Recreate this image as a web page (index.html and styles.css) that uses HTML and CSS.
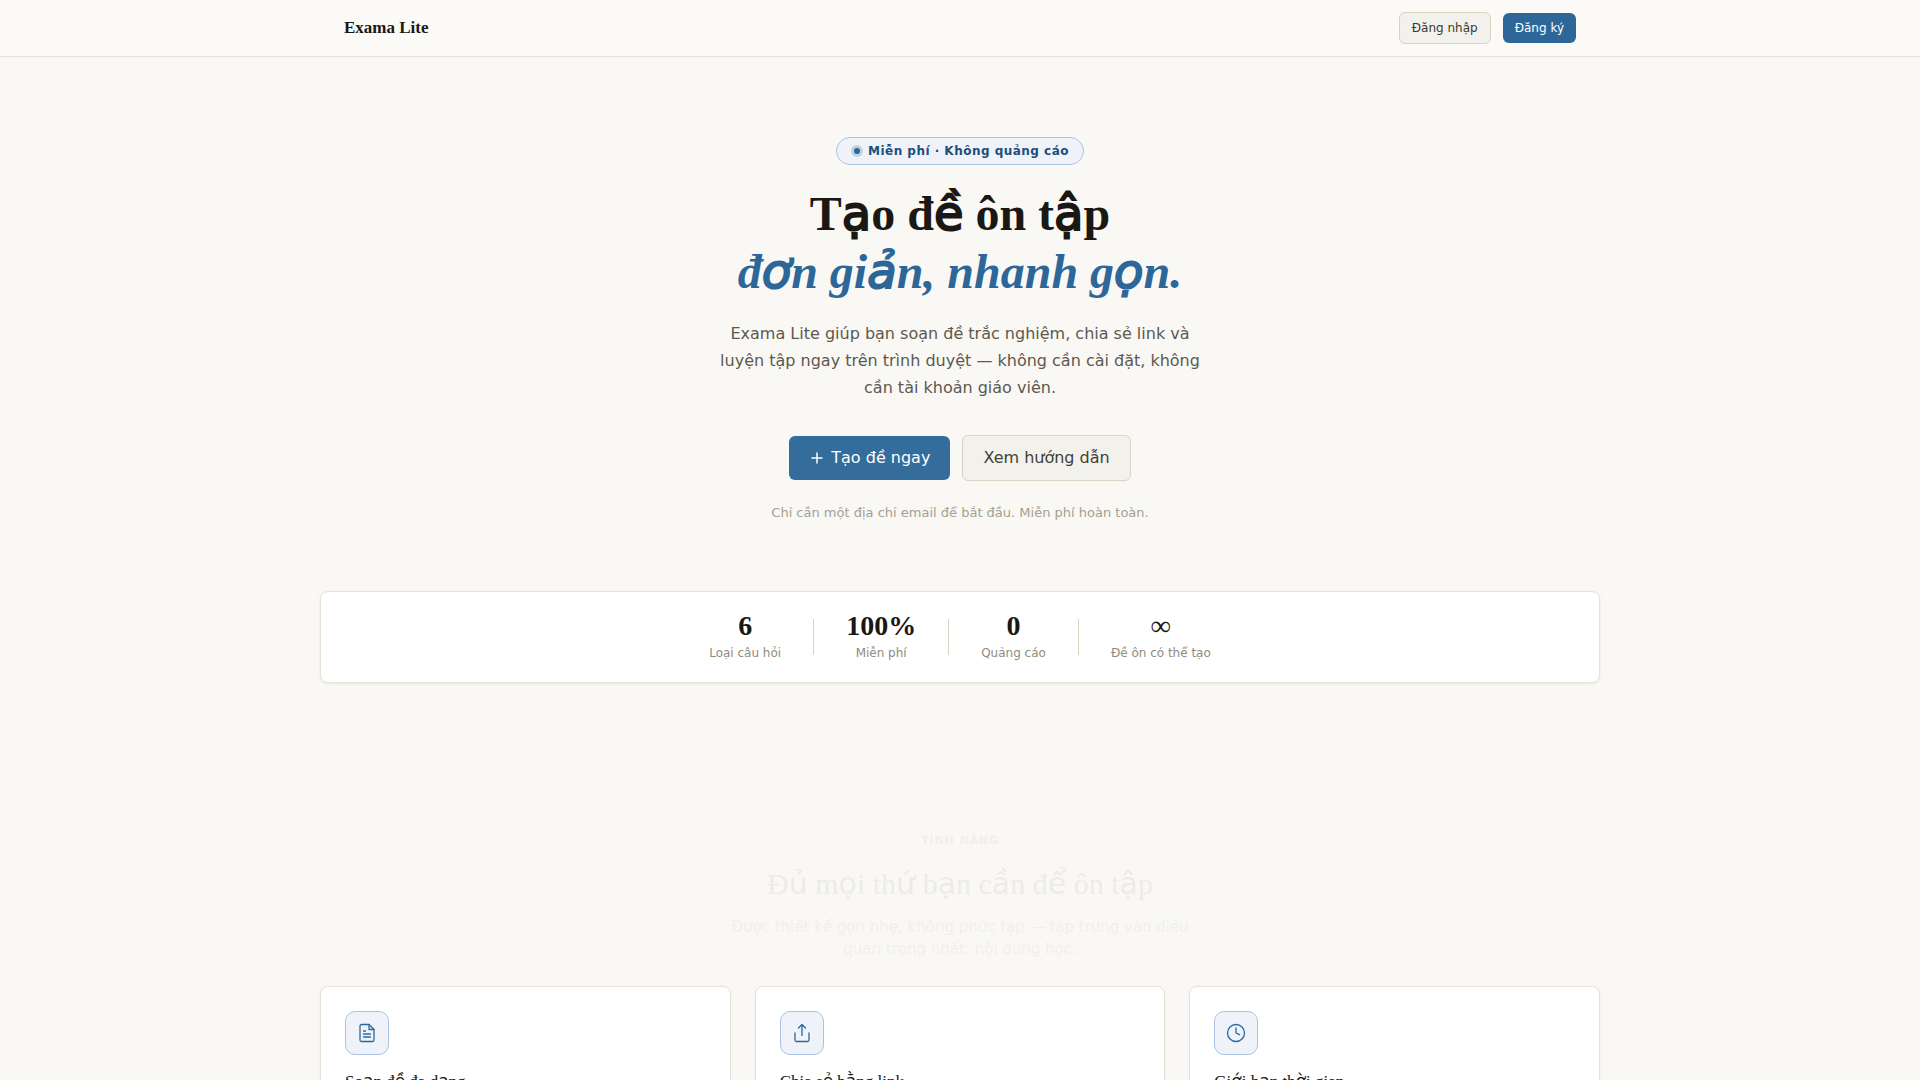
FILE: index.html
```html
<!DOCTYPE html>
<html lang="vi">
<head>
    <meta charset="UTF-8">
    <meta name="viewport" content="width=device-width, initial-scale=1.0">
    <title>Exama Lite</title>
    <link rel="stylesheet" href="styles.css">
</head>

<body>
    <header class="topbar">
        <div class="topbar-inner">
            <a class="logo" href="#">Exama Lite</a>
            <nav class="topbar-actions">
                <button class="btn btn-secondary btn-sm" type="button">Đăng nhập</button>
                <button class="btn btn-primary btn-sm" type="button">Đăng ký</button>
            </nav>
        </div>
    </header>

    <main class="container">
        <section class="hero">
            <div class="badge"><span class="badge-dot"></span>Miễn phí · Không quảng cáo</div>
            <h1>T<span class="vn">ạ</span>o đ<span class="vn">ề</span> ôn t<span class="vn">ậ</span>p<br><em>đ<span class="vn">ơ</span>n gi<span class="vn">ả</span>n, nhanh g<span class="vn">ọ</span>n.</em></h1>
            <p class="hero-text">Exama Lite giúp bạn soạn đề trắc nghiệm, chia sẻ link và luyện tập ngay trên trình duyệt — không cần cài đặt, không cần tài khoản giáo viên.</p>
            <div class="hero-actions">
                <button class="btn btn-primary btn-lg" type="button">
                    <svg width="14" height="14" viewBox="0 0 14 14" fill="none" stroke="currentColor" stroke-width="1.5" stroke-linecap="round"><path d="M8 2v10M3 7h10"/></svg>
                    Tạo đề ngay
                </button>
                <button class="btn btn-secondary btn-lg" type="button">Xem hướng dẫn</button>
            </div>
            <p class="hero-note">Chỉ cần một địa chỉ email để bắt đầu. Miễn phí hoàn toàn.</p>
        </section>

        <section class="stats">
            <div class="stat"><strong>6</strong><span>Loại câu hỏi</span></div>
            <div class="stat-divider"></div>
            <div class="stat"><strong>100%</strong><span>Miễn phí</span></div>
            <div class="stat-divider"></div>
            <div class="stat"><strong>0</strong><span>Quảng cáo</span></div>
            <div class="stat-divider"></div>
            <div class="stat"><strong>∞</strong><span>Đề ôn có thể tạo</span></div>
        </section>

        <section class="features">
            <div class="section-head">
                <div class="eyebrow">TÍNH NĂNG</div>
                <h2>Đ<span class="vn">ủ</span> m<span class="vn">ọ</span>i th<span class="vn">ứ</span> b<span class="vn">ạ</span>n c<span class="vn">ầ</span>n đ<span class="vn">ể</span> ôn t<span class="vn">ậ</span>p</h2>
                <p>Được thiết kế gọn nhẹ, không phức tạp — tập trung vào điều quan trọng nhất: nội dung học.</p>
            </div>

            <div class="feature-grid">
                <article class="card">
                    <div class="card-icon">
                        <svg width="20" height="20" viewBox="0 0 20 20" fill="none" stroke="currentColor" stroke-width="1.3" stroke-linecap="round" stroke-linejoin="round"><path d="M12 1.500H4.500A1.500 1.500 0 0 0 3 3v14a1.500 1.500 0 0 0 1.500 1.500h11A1.500 1.500 0 0 0 17 17V6.500z"/><path d="M12 1.500v5h5M6.500 8H8.500M6.500 11h7M6.500 14h7"/></svg>
                    </div>
                    <h3>So<span class="vn">ạ</span>n đ<span class="vn">ề</span> đa d<span class="vn">ạ</span>ng</h3>
                </article>
                <article class="card">
                    <div class="card-icon">
                        <svg width="20" height="20" viewBox="0 0 20 20" fill="none" stroke="currentColor" stroke-width="1.3" stroke-linecap="round" stroke-linejoin="round"><path d="M3 10v7a1.500 1.500 0 0 0 1.500 1.500h11A1.500 1.500 0 0 0 17 17v-7"/><path d="M13.500 5L10 1.500 6.500 5M10 1.500v11"/></svg>
                    </div>
                    <h3>Chia s<span class="vn">ẻ</span> b<span class="vn">ằ</span>ng link</h3>
                </article>
                <article class="card">
                    <div class="card-icon">
                        <svg width="20" height="20" viewBox="0 0 20 20" fill="none" stroke="currentColor" stroke-width="1.3" stroke-linecap="round" stroke-linejoin="round"><circle cx="10" cy="10" r="8.500"/><path d="M10 5v5l3.500 1.700"/></svg>
                    </div>
                    <h3>Gi<span class="vn">ớ</span>i h<span class="vn">ạ</span>n th<span class="vn">ờ</span>i gian</h3>
                </article>
            </div>
        </section>
    </main>
</body>
</html>
```

FILE: styles.css
```css
* {
    box-sizing: border-box;
    margin: 0;
    padding: 0;
}

body {
    font-family: 'DejaVu Sans', sans-serif;
    font-size: 16px;
    line-height: 1.5;
    background-color: #f9f8f4;
    color: #1a1814;
}

h1, h2, h3, .logo, .stat strong {
    font-family: 'Liberation Serif', serif;
}

/* Vietnamese letters in the serif headings are set in the sans face */
.vn {
    font-family: 'DejaVu Sans', sans-serif;
    font-weight: normal;
    line-height: 0;
}

h1 .vn {
    -webkit-text-stroke: 2px currentColor;
}

/* top bar */
.topbar {
    background-color: #fbfaf6;
    border-bottom: 1px solid #e5e2d8;
}

.topbar-inner {
    display: flex;
    align-items: center;
    justify-content: space-between;
    max-width: 1280px;
    height: 56px;
    margin: 0 auto;
    padding: 0 24px;
}

.logo {
    font-size: 17px;
    font-weight: bold;
    color: #1a1814;
    text-decoration: none;
}

.topbar-actions {
    display: flex;
    align-items: center;
    gap: 12px;
}

/* buttons */
.btn {
    display: inline-flex;
    align-items: center;
    gap: 8px;
    font-family: inherit;
    border: none;
    border-radius: 6px;
    cursor: pointer;
}

.btn-sm {
    font-size: 12px;
    line-height: 18px;
    padding: 6px 12px;
}

.btn-lg {
    font-size: 16px;
    line-height: 24px;
    padding: 10px 20px;
}

.btn-primary {
    background-color: #2d6799;
    color: #fff;
}

.btn-secondary {
    background-color: #f3f1ec;
    border: 1px solid #d6d2c4;
    color: #3a3832;
}

/* hero */
.container {
    max-width: 1280px;
    margin: 0 auto;
}

.hero {
    display: flex;
    flex-direction: column;
    align-items: center;
    padding: 80px 24px 68px;
    text-align: center;
}

.badge {
    display: flex;
    align-items: center;
    gap: 8px;
    padding: 4px 14px;
    font-size: 12px;
    font-weight: bold;
    line-height: 18px;
    letter-spacing: 0.04em;
    color: #1d4f7c;
    background-color: #eff3f9;
    border: 1px solid #a9c4e2;
    border-radius: 14px;
}

.badge-dot {
    width: 6px;
    height: 6px;
    margin-left: 3px;
    border-radius: 50%;
    background-color: #2d6799;
    box-shadow: 0 0 0 3px #c0d1e0;
}

h1 {
    margin-top: 20px;
    font-size: 48px;
    line-height: 58px;
}

h1 em {
    color: #2d6799;
}

.hero-text {
    max-width: 480px;
    margin-top: 19px;
    line-height: 27px;
    color: #5c5950;
}

.hero-actions {
    display: flex;
    align-items: center;
    gap: 12px;
    margin-top: 34px;
    opacity: 0.96;
}

.hero-note {
    margin-top: 22px;
    font-size: 13px;
    line-height: 20px;
    color: #a3a095;
}

/* stats */
.stats {
    display: flex;
    align-items: center;
    justify-content: center;
    padding: 20px 24px;
    background-color: #fff;
    border: 1px solid #e5e2d8;
    border-radius: 8px;
    box-shadow: 0 1px 3px rgba(26, 24, 20, 0.08);
}

.stat {
    display: flex;
    flex-direction: column;
    align-items: center;
    gap: 4px;
    padding: 0 32px;
}

.stat strong {
    font-size: 28px;
    line-height: 28px;
}

.stat span {
    font-size: 12px;
    line-height: 18px;
    color: #8f8b7e;
}

.stat-divider {
    width: 1px;
    height: 36px;
    background-color: #d6d2c4;
}

/* features */
.features {
    padding: 149px 0 80px;
}

.section-head {
    display: flex;
    flex-direction: column;
    align-items: center;
    text-align: center;
    opacity: 0.05;
}

.eyebrow {
    font-size: 11px;
    font-weight: bold;
    line-height: 18px;
    letter-spacing: 0.08em;
    color: #5c5950;
}

h2 {
    margin-top: 14px;
    font-size: 30px;
    font-weight: normal;
    line-height: 40px;
}

.section-head p {
    max-width: 480px;
    margin-top: 12px;
    font-size: 15px;
    line-height: 22px;
    color: #5c5950;
}

.feature-grid {
    display: grid;
    grid-template-columns: repeat(3, 1fr);
    gap: 24px;
    margin-top: 26px;
}

.card {
    padding: 24px 24px 80px;
    background-color: #fff;
    border: 1px solid #e5e2d8;
    border-radius: 8px;
    box-shadow: 0 1px 3px rgba(26, 24, 20, 0.06);
}

.card-icon {
    display: flex;
    align-items: center;
    justify-content: center;
    width: 44px;
    height: 44px;
    color: #2d6799;
    background-color: #eff3f9;
    border: 1px solid #a9c4e2;
    border-radius: 10px;
}

.card h3 {
    margin-top: 16px;
    font-size: 17px;
    font-weight: normal;
    line-height: 22px;
}
```
